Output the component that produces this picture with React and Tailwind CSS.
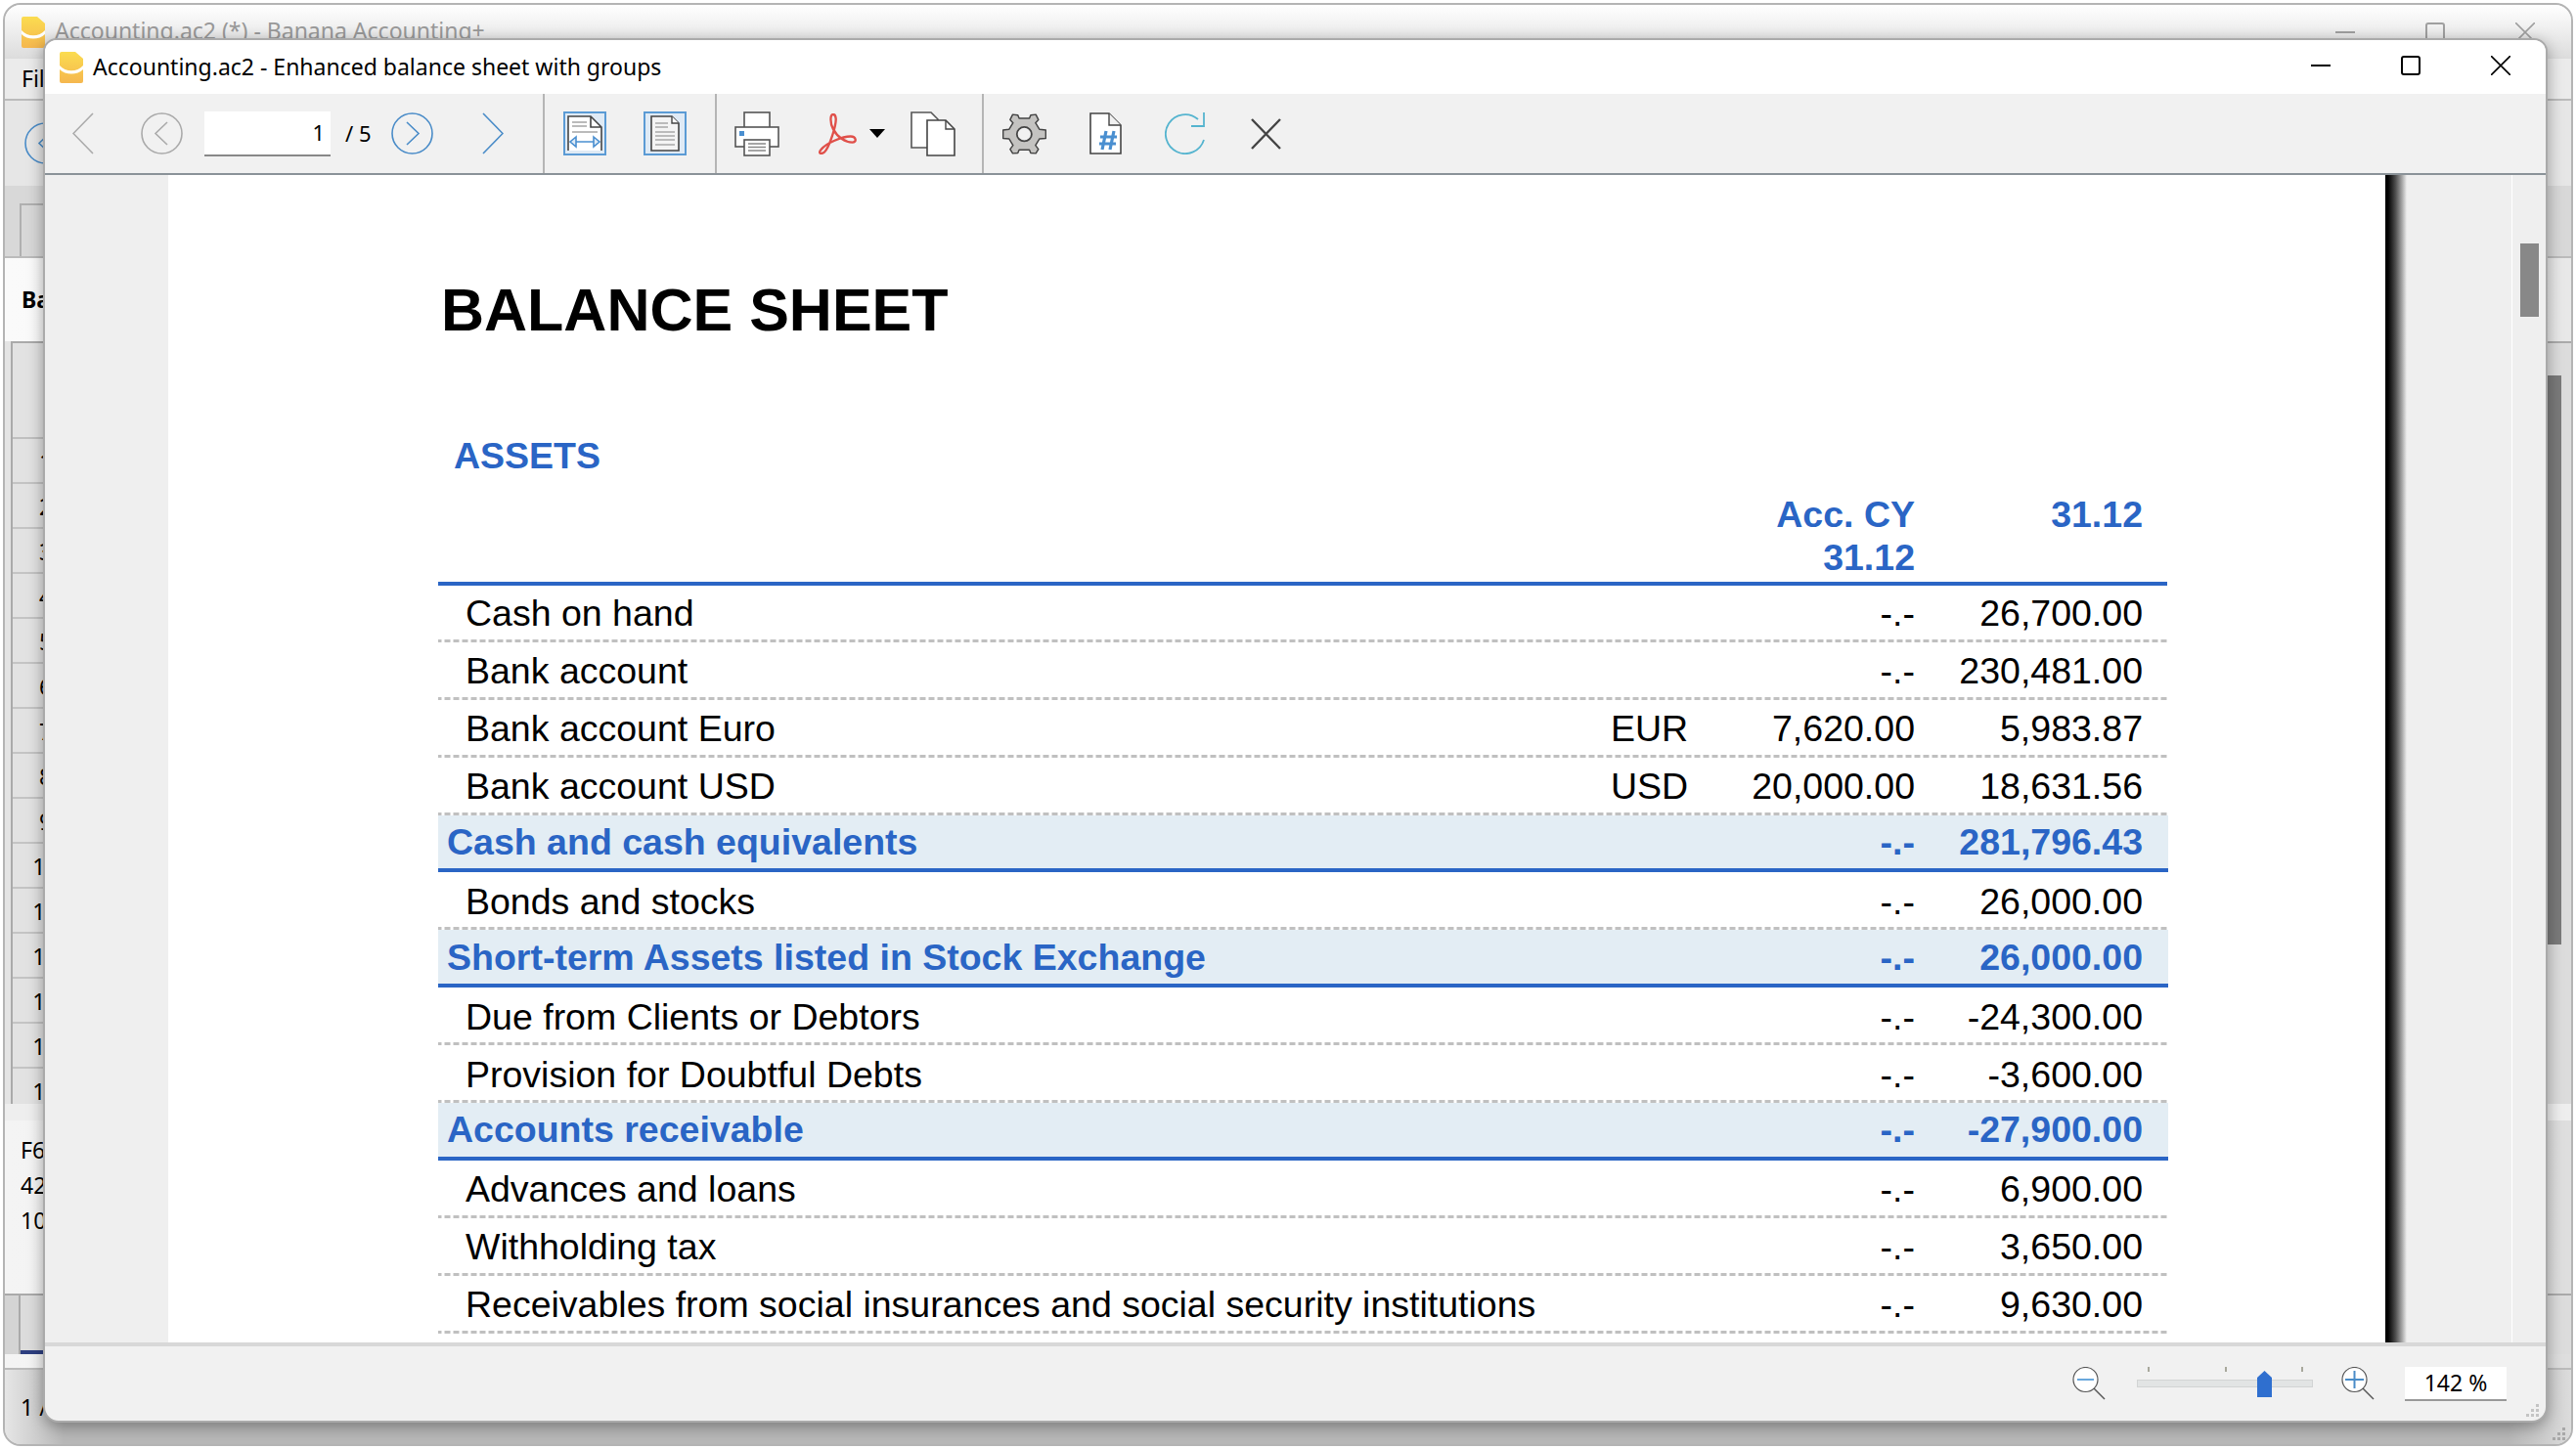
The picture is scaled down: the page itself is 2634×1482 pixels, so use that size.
import React from 'react';

const BLUE = 'text-[#2a65c5]';

const rows = [
  { label: 'Cash on hand', a: '-.-', b: '26,700.00' },
  { label: 'Bank account', a: '-.-', b: '230,481.00' },
  { label: 'Bank account Euro', cur: 'EUR', a: '7,620.00', b: '5,983.87' },
  { label: 'Bank account USD', cur: 'USD', a: '20,000.00', b: '18,631.56' },
  { label: 'Cash and cash equivalents', a: '-.-', b: '281,796.43', group: true },
  { label: 'Bonds and stocks', a: '-.-', b: '26,000.00' },
  { label: 'Short-term Assets listed in Stock Exchange', a: '-.-', b: '26,000.00', group: true },
  { label: 'Due from Clients or Debtors', a: '-.-', b: '-24,300.00' },
  { label: 'Provision for Doubtful Debts', a: '-.-', b: '-3,600.00' },
  { label: 'Accounts receivable', a: '-.-', b: '-27,900.00', group: true },
  { label: 'Advances and loans', a: '-.-', b: '6,900.00' },
  { label: 'Withholding tax', a: '-.-', b: '3,650.00' },
  { label: 'Receivables from social insurances and social security institutions', a: '-.-', b: '9,630.00' },
];

const Logo = ({ id }) => (
  <svg width="24" height="32" viewBox="0 0 24 32" className="shrink-0">
    <defs>
      <linearGradient id={id} x1="0" y1="0" x2="0" y2="1">
        <stop offset="0" stopColor="#fbdc50" />
        <stop offset="1" stopColor="#f5b74f" />
      </linearGradient>
    </defs>
    <path d="M2 0H16L24 7V30a2 2 0 0 1-2 2H2a2 2 0 0 1-2-2V2a2 2 0 0 1 2-2Z" fill={`url(#${id})`} />
    <path d="M0 14C6 21 18 21 24 14V18C18 24 6 24 0 18Z" fill="#fff" />
  </svg>
);

const Chevron = ({ dir, color, w = 22, h = 43 }) => (
  <svg width={w} height={h} viewBox={`0 0 ${w} ${h}`} className="shrink-0">
    <path
      d={dir === 'left' ? `M${w - 1} 1L1 ${h / 2}L${w - 1} ${h - 1}` : `M1 1L${w - 1} ${h / 2}L1 ${h - 1}`}
      fill="none"
      stroke={color}
      strokeWidth="1.6"
    />
  </svg>
);

const CircleNav = ({ dir, color }) => (
  <svg width="43" height="43" viewBox="0 0 43 43" className="shrink-0">
    <circle cx="21.5" cy="21.5" r="20.5" fill="none" stroke={color} strokeWidth="1.6" />
    <path d={dir === 'left' ? 'M27 10L15 21.5L27 33' : 'M16 10L28 21.5L16 33'} fill="none" stroke={color} strokeWidth="1.6" />
  </svg>
);

const FitWidthIcon = () => (
  <svg width="44" height="45" viewBox="0 0 44 45" className="shrink-0">
    <rect x="1" y="1" width="42" height="43" fill="#dfeaf5" stroke="#5b9bd5" strokeWidth="2" />
    <path d="M5 40V5H28L39 16V40Z" fill="#fff" />
    <path d="M5 40V5H28L39 16V40M28 5V16H39" fill="none" stroke="#444" strokeWidth="1.6" />
    <path d="M9 11H24M9 15H24M9 21H35" stroke="#bbb" strokeWidth="1.8" />
    <path d="M9 31H35" stroke="#4a8fd0" strokeWidth="1.6" />
    <path d="M13 26L7 31L13 36ZM31 26L37 31L31 36Z" fill="#dfeaf5" stroke="#4a8fd0" strokeWidth="1.6" />
  </svg>
);

const FullPageIcon = () => (
  <svg width="44" height="45" viewBox="0 0 44 45" className="shrink-0">
    <rect x="1" y="1" width="42" height="43" fill="#dfeaf5" stroke="#5b9bd5" strokeWidth="2" />
    <path d="M8 40V5H29L36 12V40Z" fill="#f4f4f4" stroke="#444" strokeWidth="1.6" />
    <path d="M29 5V12H36" fill="#fff" stroke="#444" strokeWidth="1.4" />
    <path d="M12 12H25M12 16H25M12 21H32M12 25H32M12 29H32M12 34H32" stroke="#bbb" strokeWidth="1.8" />
  </svg>
);

const PrinterIcon = () => (
  <svg width="46" height="46" viewBox="0 0 46 46" className="shrink-0">
    <rect x="10" y="1" width="26" height="16" fill="#fff" stroke="#555" strokeWidth="1.6" />
    <rect x="1" y="16" width="44" height="20" fill="#fff" stroke="#555" strokeWidth="1.6" />
    <rect x="5" y="20" width="5" height="5" fill="#4a8fd0" />
    <rect x="10" y="29" width="26" height="16" fill="#fff" stroke="#555" strokeWidth="1.6" />
    <path d="M14 33H32M14 36.5H32M14 40H32" stroke="#888" strokeWidth="1.6" />
  </svg>
);

const PdfIcon = () => (
  <svg width="40" height="42" viewBox="275 30 118 125" className="shrink-0">
    <path
      d="M322 33C312 33 312 60 322 78C335 103 360 118 380 118C395 118 392 100 375 100C350 100 300 120 285 140C275 152 285 155 295 148C310 135 332 65 330 45C329 36 326 33 322 33Z"
      fill="none"
      stroke="#e0504a"
      strokeWidth="7"
    />
  </svg>
);

const CopyIcon = () => (
  <svg width="46" height="46" viewBox="0 0 46 46" className="shrink-0">
    <path d="M1 37V1H21L28 8V37Z" fill="#fff" stroke="#555" strokeWidth="1.6" />
    <path d="M17 45V9H36L45 18V45Z" fill="#fff" stroke="#444" strokeWidth="1.6" />
    <path d="M36 9V18H45" fill="none" stroke="#444" strokeWidth="1.4" />
  </svg>
);

const GearIcon = () => (
  <svg width="45" height="42" viewBox="30 30 137 125" className="shrink-0">
    <polygon
      points="82,44 114,44 118,34 134,32 142,48 133,58 145,78 165,80 165,106 145,108 133,128 142,140 134,153 118,152 114,142 82,142 78,152 62,153 54,140 63,128 51,108 32,106 32,80 51,78 63,58 54,48 62,32 78,34"
      fill="#c4c3c1"
      stroke="#444"
      strokeWidth="4.5"
      strokeLinejoin="round"
    />
    <ellipse cx="98" cy="93" rx="23" ry="22" fill="#f1f1f1" stroke="#444" strokeWidth="5.5" />
  </svg>
);

const HashDocIcon = () => (
  <svg width="33" height="43" viewBox="0 0 33 43" className="shrink-0">
    <path d="M1 42V1H20L32 13V42Z" fill="#fff" stroke="#444" strokeWidth="1.6" />
    <path d="M20 1V13H32" fill="#f1f1f1" stroke="#444" strokeWidth="1.4" />
    <path d="M17 19L13 38M25 19L21 38M11 25H28M10 32H27" fill="none" stroke="#4a8fd0" strokeWidth="3.2" />
  </svg>
);

const RefreshIcon = () => (
  <svg width="42" height="43" viewBox="0 0 42 43" className="shrink-0">
    <path d="M34 7A20 20 0 1 0 40 28" fill="none" stroke="#55b4cf" strokeWidth="1.8" />
    <path d="M40 0V14H27" fill="none" stroke="#55b4cf" strokeWidth="1.8" />
  </svg>
);

const CloseThick = () => (
  <svg width="31" height="32" viewBox="0 0 31 32" className="shrink-0">
    <path d="M1 1L30 31M30 1L1 31" fill="none" stroke="#444" strokeWidth="2.4" />
  </svg>
);

const Magnifier = ({ plus, color }) => (
  <svg width="34" height="34" viewBox="0 0 34 34" className="shrink-0">
    <circle cx="13.5" cy="13" r="12.5" fill="#fff" stroke="#555" strokeWidth="1.2" />
    <path d="M22 22L33 33" stroke="#555" strokeWidth="1.4" />
    <path d={plus ? 'M4 13H23M13.5 4V22' : 'M5 13H22'} stroke={color} strokeWidth="2" />
  </svg>
);

const WinControls = ({ color, gap, stroke = 2, className = '' }) => (
  <div className={`flex items-center ${gap} ${className}`}>
    <svg width="20" height="20" viewBox="0 0 20 20">
      <path d="M0 10H20" stroke={color} strokeWidth={stroke} />
    </svg>
    <svg width="20" height="20" viewBox="0 0 20 20">
      <rect x="1" y="1" width="18" height="18" rx="2" fill="none" stroke={color} strokeWidth={stroke} />
    </svg>
    <svg width="20" height="20" viewBox="0 0 20 20">
      <path d="M0 0L20 20M20 0L0 20" stroke={color} strokeWidth={stroke * 0.8} />
    </svg>
  </div>
);

const Separator = ({ ml }) => <div className={`w-[2px] h-full bg-[#b5b5b5] shrink-0 ${ml}`} />;

const Grip = ({ className = 'fill-[#c4c4c4]' }) => (
  <svg width="14" height="14" viewBox="0 0 14 14" className={className}>
    <rect x="10" y="0" width="3" height="3" />
    <rect x="5" y="5" width="3" height="3" />
    <rect x="10" y="5" width="3" height="3" />
    <rect x="0" y="10" width="3" height="3" />
    <rect x="5" y="10" width="3" height="3" />
    <rect x="10" y="10" width="3" height="3" />
  </svg>
);

function BackWindow() {
  const nums = Array.from({ length: 15 }, (_, i) => i + 1);
  return (
    <div className="absolute left-[3px] top-[3px] w-[2628px] h-[1476px] border-2 border-[#b4b4b4] rounded-[18px] overflow-hidden flex flex-col bg-[#e4e4e4] font-['Noto_Sans',sans-serif] text-[23px] text-black">
      <div className="h-[55px] shrink-0 flex items-center justify-between pl-[17px] pr-[37px] bg-gradient-to-b from-white to-[#dcdcdc]">
        <div className="flex items-center gap-[10px]">
          <Logo id="logo-back" />
          <span className="text-[#999] -mt-[2px]">Accounting.ac2 (*) - Banana Accounting+</span>
        </div>
        <WinControls color="#a0a0a0" gap="gap-[72px]" />
      </div>
      <div className="h-[43px] shrink-0 flex items-center pl-[17px] bg-[#ebebeb] border-b-2 border-[#bbb]">File</div>
      <div className="h-[87px] shrink-0 flex items-center pl-[20px] bg-[#e6e6e6]">
        <CircleNav dir="left" color="#4a8cc8" />
      </div>
      <div className="h-[74px] shrink-0 flex items-end pl-[15px] bg-[#d8d8d8] border-b-2 border-[#bbb]">
        <div className="w-[60px] h-[54px] border-l-2 border-t-2 border-[#b0b0b0]" />
      </div>
      <div className="h-[85px] shrink-0 flex items-center pl-[17px] bg-gradient-to-r from-[#fafafa] to-[#e8e8e8] font-bold">Balance</div>
      <div className="flex-1 min-h-0 flex bg-white border-t-2 border-[#aaa] ml-[6px]">
        <div className="w-[66px] border-l-2 border-[#aaa] bg-[#e2e2e2] flex flex-col overflow-hidden">
          <div className="h-[98px] shrink-0 border-b-2 border-[#c0c0c0]" />
          {nums.map((n) => (
            <div key={n} className="h-[46px] shrink-0 flex items-center justify-center border-b-2 border-[#c4c4c4] pl-[3px] pt-[3px]">
              {n}
            </div>
          ))}
        </div>
        <div className="flex-1" />
        <div className="w-[26px] bg-[#dcdcdc] pt-[33px] pr-[10px]">
          <div className="w-[15px] h-[582px] ml-[1px] bg-[#7a7a7a]" />
        </div>
      </div>
      <div className="h-[17px] shrink-0 bg-[#eee]" />
      <div className="h-[253px] shrink-0 flex flex-col bg-gradient-to-r from-[#f4f4f4] to-[#dedede] leading-[36px]">
        <div className="pl-[16px] pt-[12px]">
          <div>F6</div>
          <div>42</div>
          <div>10</div>
        </div>
        <div className="mt-auto mb-[14px] h-[62px] flex items-end border-t-2 border-[#aaa] bg-[#dcdcdc]">
          <div className="w-[16px] h-full shrink-0 bg-[#d4d4d4] border-r-2 border-[#aaa]" />
          <div className="w-[200px] h-[4px] bg-[#2d3f80]" />
        </div>
      </div>
      <div className="relative h-[78px] shrink-0 flex items-center pl-[16px] border-t-2 border-[#bbb] bg-[linear-gradient(90deg,#e6e6e6_0,#b8b8b8_60px,#b8b8b8_2560px,#dcdcdc_100%)]">
        1 / 2
        <div className="absolute right-[5px] bottom-[3px]">
          <Grip className="fill-[#a8a8a8]" />
        </div>
      </div>
    </div>
  );
}

function Row({ row }) {
  if (row.group) {
    return (
      <div className="grid grid-cols-[1199px_80px_231px_233px] items-center h-[58.9px] w-[1769px] bg-[#e3edf4] border-b-4 border-[#2a65c5] text-[#2a65c5] font-bold">
        <div className="pl-[9px]">{row.label}</div>
        <div />
        <div className="text-right">{row.a}</div>
        <div className="text-right">{row.b}</div>
      </div>
    );
  }
  return (
    <div className="grid grid-cols-[1199px_80px_231px_233px] items-center h-[58.9px] w-[1768px] text-black bg-[linear-gradient(90deg,#c0c0c0_6px,transparent_6px)] bg-[length:9px_3px] bg-bottom bg-repeat-x">
      <div className="pl-[28px]">{row.label}</div>
      <div>{row.cur}</div>
      <div className="text-right">{row.a}</div>
      <div className="text-right">{row.b}</div>
    </div>
  );
}

function Dialog() {
  return (
    <div className="absolute left-[44px] top-[39px] w-[2561px] h-[1416px] flex flex-col overflow-hidden bg-[#f1f1f1] border-2 border-[#aaa] rounded-t-[14px] rounded-b-[16px] shadow-[0_4px_16px_rgba(0,0,0,0.35)]">
      <div className="h-[55px] shrink-0 flex items-center justify-between bg-white pl-[15px] pr-[36px] font-['Noto_Sans',sans-serif] text-[23px] text-black">
        <div className="flex items-center gap-[10px]">
          <Logo id="logo-front" />
          <span>Accounting.ac2 - Enhanced balance sheet with groups</span>
        </div>
        <WinControls color="#000" gap="gap-[72px]" className="mb-[3px]" />
      </div>

      <div className="h-[83px] shrink-0 flex items-center pl-[28px] border-b-2 border-[#8a9298] font-['Noto_Sans',sans-serif] text-[22px] text-black">
        <Chevron dir="left" color="#aaa" />
        <div className="ml-[48px]">
          <CircleNav dir="left" color="#aaa" />
        </div>
        <div className="ml-[22px] w-[129px] h-[46px] shrink-0 flex items-center justify-end pr-[6px] bg-white border-b-2 border-[#888]">1</div>
        <div className="ml-[15px] w-[27px] shrink-0 whitespace-nowrap">/ 5</div>
        <div className="ml-[20px]">
          <CircleNav dir="right" color="#4a8cc8" />
        </div>
        <div className="ml-[50px]">
          <Chevron dir="right" color="#4a8cc8" />
        </div>
        <Separator ml="ml-[40px]" />
        <div className="ml-[19px]"><FitWidthIcon /></div>
        <div className="ml-[38px]"><FullPageIcon /></div>
        <Separator ml="ml-[29px]" />
        <div className="ml-[18px]"><PrinterIcon /></div>
        <div className="ml-[39px]"><PdfIcon /></div>
        <div className="ml-[13px] w-0 h-0 border-x-[8.5px] border-x-transparent border-t-[9px] border-t-black" />
        <div className="ml-[26px]"><CopyIcon /></div>
        <Separator ml="ml-[27px]" />
        <div className="ml-[19px]"><GearIcon /></div>
        <div className="ml-[44px]"><HashDocIcon /></div>
        <div className="ml-[44px]"><RefreshIcon /></div>
        <div className="ml-[46px]"><CloseThick /></div>
      </div>

      <div className="flex-1 min-h-0 flex bg-[#efefef]">
        <div className="w-[126px] shrink-0" />
        <div className="w-[2267px] shrink-0 bg-white overflow-hidden pl-[276px] font-['Liberation_Sans',Arial,sans-serif] text-[37.5px] leading-[44px]">
          <h1 className="mt-[103px] pl-[3px] text-[61px] leading-[70px] font-bold text-black">BALANCE SHEET</h1>
          <div className={`mt-[92px] pl-[16px] font-bold ${BLUE}`}>ASSETS</div>
          <div className={`mt-[16px] grid grid-cols-[1199px_80px_231px_233px] w-[1768px] font-bold ${BLUE}`}>
            <div />
            <div />
            <div className="text-right">
              Acc. CY
              <br />
              31.12
            </div>
            <div className="text-right">31.12</div>
          </div>
          <div className="mt-[3px] mb-[-1px] h-[4px] w-[1768px] bg-[#2a65c5]" />
          {rows.map((r) => (
            <Row key={r.label} row={r} />
          ))}
        </div>
        <div className="w-[22px] shrink-0 bg-gradient-to-r from-black via-[#555] to-[#efefef]" />
        <div className="w-[108px] shrink-0 border-r border-white" />
        <div className="w-[35px] shrink-0 pl-[8px] pt-[70px]">
          <div className="w-[19px] h-[75px] bg-[#888]" />
        </div>
      </div>

      <div className="relative h-[80px] shrink-0 flex items-center justify-end pr-[40px] border-t-[4px] border-[#d8d8d8] font-['Noto_Sans',sans-serif] text-[23px] text-black">
        <Magnifier color="#6aa8dc" />
        <div className="relative ml-[32px] w-[180px] h-[8px] bg-[#e2e4e4] border border-[#d2d4d4]">
          <div className="absolute left-[10px] top-[-14px] w-[2px] h-[5px] bg-[#a8a89c]" />
          <div className="absolute left-[89px] top-[-14px] w-[2px] h-[5px] bg-[#a8a89c]" />
          <div className="absolute left-[167px] top-[-14px] w-[2px] h-[5px] bg-[#a8a89c]" />
          <svg width="15" height="27" viewBox="0 0 15 27" className="absolute left-[122px] top-[-10px]">
            <path d="M0 7L7.5 0L15 7V27H0Z" fill="#2f6fcf" />
          </svg>
        </div>
        <div className="ml-[29px]">
          <Magnifier plus color="#4a8cc8" />
        </div>
        <div className="ml-[31px] w-[104px] h-[35px] flex items-center justify-center bg-white border-b-2 border-[#999]">142 %</div>
        <div className="absolute right-[6px] bottom-[3px]">
          <Grip />
        </div>
      </div>
    </div>
  );
}

export default function App() {
  return (
    <div className="relative w-[2634px] h-[1482px] overflow-hidden bg-white">
      <BackWindow />
      <Dialog />
    </div>
  );
}
